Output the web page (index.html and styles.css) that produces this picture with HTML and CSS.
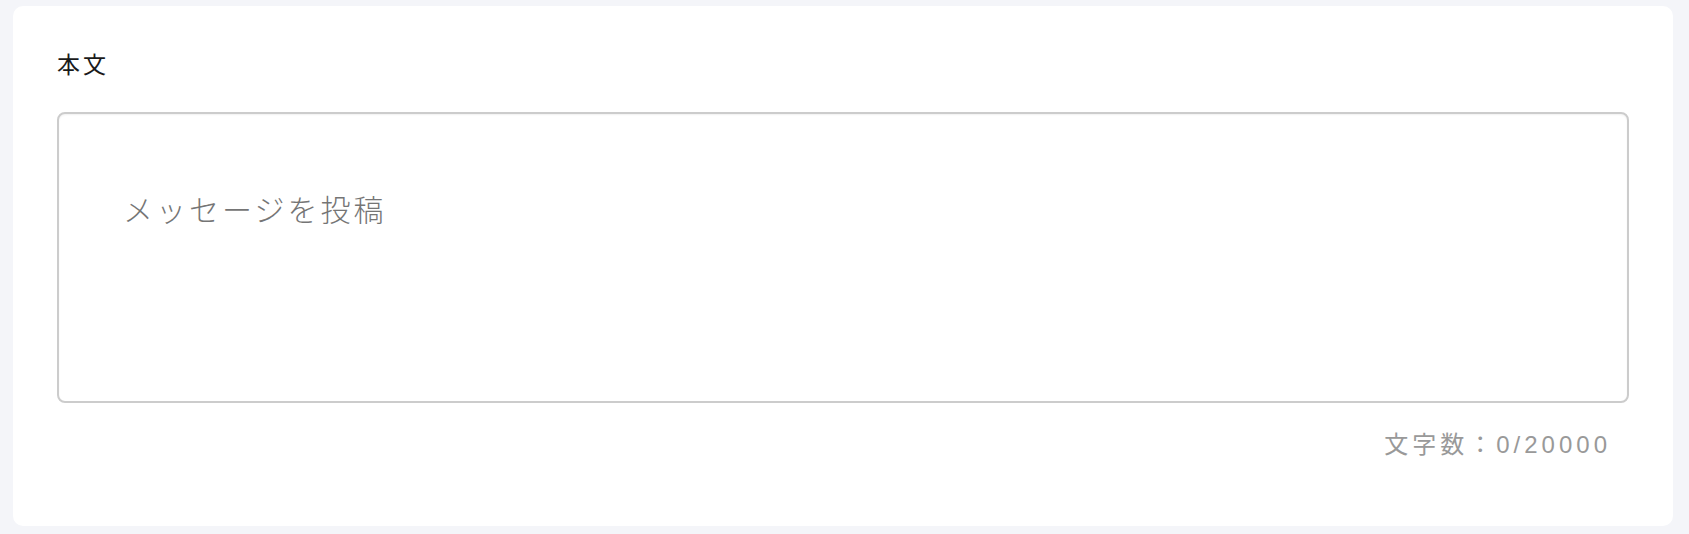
FILE: index.html
```html
<!DOCTYPE html>
<html lang="ja">
<head>
<meta charset="utf-8">
<title>本文</title>
<link rel="stylesheet" href="styles.css">
</head>
<body>
  <div class="card">
    <label class="field-label" for="body">本文</label>
    <textarea id="body" class="message" placeholder="メッセージを投稿"></textarea>
    <div class="counter">文字数：0/20000</div>
  </div>
</body>
</html>
```
FILE: styles.css
```css
html, body {
  margin: 0;
  padding: 0;
  background: #f4f5f9;
}

body {
  font-family: "Liberation Sans", "Noto Sans CJK JP", sans-serif;
  padding: 6px 16px 8px 13px;
}

.card {
  background: #ffffff;
  border-radius: 10px;
  padding: 44px 44px 64px 44px;
  display: flex;
  flex-direction: column;
}

.field-label {
  font-size: 23px;
  line-height: 30px;
  letter-spacing: 3px;
  color: #1a1a1a;
  display: block;
}

.message {
  margin-top: 32px;
  box-sizing: border-box;
  width: 1572px;
  height: 291px;
  border: 2px solid #cccccc;
  border-radius: 8px;
  box-shadow: inset 0 1px 2px rgba(0, 0, 0, 0.06);
  padding: 76px 64px 20px 64px;
  font-family: "Liberation Sans", "Noto Sans CJK JP", sans-serif;
  font-size: 30px;
  line-height: 42px;
  letter-spacing: 3px;
  color: #333;
  resize: none;
  outline: none;
  background: #fff;
}

.message::placeholder {
  color: #757575;
  font-weight: 300;
}

.counter {
  width: 1572px;
  box-sizing: border-box;
  margin-top: 25px;
  padding-right: 18px;
  text-align: right;
  font-size: 24px;
  line-height: 34px;
  letter-spacing: 4px;
  color: #999999;
}
```
